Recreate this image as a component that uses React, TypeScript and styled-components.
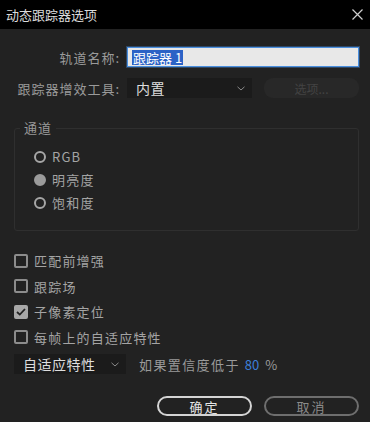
import { createGlobalStyle, styled } from "styled-components"

const GlobalStyle = createGlobalStyle`
  html, body {
    margin: 0;
    padding: 0;
    background: #222222;
  }
  body {
    font-family: "Noto Sans CJK SC", "Noto Sans", sans-serif;
  }
`

const Dialog = styled.div`
  width: 370px;
  height: 422px;
  overflow: hidden;
  display: flex;
  flex-direction: column;
  background: #222222;
`

const TitleBar = styled.div`
  height: 29px;
  flex-shrink: 0;
  background: #000;
  display: flex;
  align-items: center;
  justify-content: space-between;
  padding: 0 7px 0 6px;
  color: #dcdcdc;
  font-size: 13px;
`

const Body = styled.div`
  display: flex;
  flex-direction: column;
  padding: 18px 11px 0 14px;
`

const FieldRow = styled.div<{ $gap?: number }>`
  display: grid;
  grid-template-columns: 106px 1fr;
  column-gap: 7px;
  align-items: center;
  height: 20px;
  margin-top: ${({ $gap }) => $gap ?? 0}px;
`

const Label = styled.span`
  text-align: right;
  color: #9a9a9a;
  font-size: 13px;
  letter-spacing: 1px;
  white-space: nowrap;
`

const TextField = styled.div`
  height: 20px;
  box-sizing: border-box;
  background: #e8e8e8;
  border: 1px solid #4a8fdf;
  box-shadow: 0 0 0 1px rgba(74, 143, 223, 0.35);
  padding: 0 4px;
  display: flex;
  align-items: center;
`

const Selected = styled.span`
  background: #2b62c6;
  color: #fff;
  font-size: 13px;
  line-height: 15px;
  padding: 0 1px;
`

const ToolCell = styled.div`
  display: grid;
  grid-template-columns: 1fr 95px;
  column-gap: 12px;
  height: 20px;
`

const Select = styled.div<{ $width?: number }>`
  height: 20px;
  box-sizing: border-box;
  ${({ $width }) => ($width ? `width: ${$width}px;` : "")}
  background: #1b1b1b;
  display: flex;
  align-items: center;
  justify-content: space-between;
  padding: 0 7px 0 9px;
  color: #dedede;
  font-size: 14px;
  letter-spacing: 0.5px;
`

const OptionsButton = styled.div`
  background: #282828;
  border-radius: 9px;
  color: #434343;
  font-size: 12px;
  display: flex;
  align-items: center;
  justify-content: center;
`

const Group = styled.fieldset`
  margin: 22px 0 0 0;
  padding: 0;
  border: 1px solid #2f2f2f;
  border-radius: 3px;
  min-width: 0;
`

const Legend = styled.legend`
  margin-left: 5px;
  padding: 0 4px;
  color: #999;
  font-size: 13px;
  line-height: 16px;
  letter-spacing: 1px;
`

const RadioList = styled.div`
  display: flex;
  flex-direction: column;
  padding: 9px 0 16px 19px;
`

const OptionRow = styled.div<{ $height: number }>`
  display: flex;
  align-items: center;
  gap: 6px;
  height: ${({ $height }) => $height}px;
  color: #a4a4a4;
  font-size: 13px;
  letter-spacing: 1.2px;
`

const Radio = styled.span<{ $on?: boolean }>`
  width: 12px;
  height: 12px;
  box-sizing: border-box;
  border-radius: 50%;
  border: 2px solid ${({ $on }) => ($on ? "#9b9b9b" : "#a6a6a6")};
  background: ${({ $on }) => ($on ? "#9b9b9b" : "transparent")};
  flex-shrink: 0;
`

const CheckList = styled.div`
  display: flex;
  flex-direction: column;
  margin-top: 17px;
`

const Box = styled.span<{ $on?: boolean }>`
  width: 14px;
  height: 14px;
  box-sizing: border-box;
  border-radius: 2px;
  border: 2px solid ${({ $on }) => ($on ? "#a8a8a8" : "#8c8c8c")};
  background: ${({ $on }) => ($on ? "#a8a8a8" : "transparent")};
  display: flex;
  align-items: center;
  justify-content: center;
  flex-shrink: 0;
`

const AdaptRow = styled.div`
  display: flex;
  align-items: center;
  gap: 13px;
  margin-top: 4px;
`

const Threshold = styled.span`
  color: #9a9a9a;
  font-size: 13px;
  letter-spacing: 1.4px;
  white-space: nowrap;
`

const Value = styled.span`
  color: #3b7fd8;
  margin: 0 6px 0 5px;
  letter-spacing: 0;
`

const Footer = styled.div`
  display: flex;
  justify-content: flex-end;
  gap: 12px;
  margin-top: 22px;
`

const PillButton = styled.button<{ $primary?: boolean }>`
  width: 95px;
  height: 20px;
  box-sizing: border-box;
  border-radius: 10px;
  border: 2px solid ${({ $primary }) => ($primary ? "#d4d4d4" : "#6e6e6e")};
  background: transparent;
  color: ${({ $primary }) => ($primary ? "#e6e6e6" : "#8a8a8a")};
  font-family: inherit;
  font-size: 13px;
  letter-spacing: 2px;
  padding: 0;
  display: flex;
  align-items: center;
  justify-content: center;
  line-height: 1;
`

function Chevron() {
  return (
    <svg width="8" height="5" viewBox="0 0 8 5">
      <path d="M0.5 0.8 L4 4 L7.5 0.8" stroke="#8a8a8a" strokeWidth="1" fill="none" />
    </svg>
  )
}

function CloseIcon() {
  return (
    <svg width="11" height="11" viewBox="0 0 11 11">
      <path d="M0.5 0.5 L10.5 10.5 M10.5 0.5 L0.5 10.5" stroke="#cfcfcf" strokeWidth="1.2" />
    </svg>
  )
}

function Check() {
  return (
    <svg width="10" height="8" viewBox="0 0 10 8">
      <path d="M1 4 L3.8 6.6 L9 1" stroke="#222" strokeWidth="1.8" fill="none" />
    </svg>
  )
}

const channels = [
  { name: "RGB", on: false },
  { name: "明亮度", on: true },
  { name: "饱和度", on: false },
]

const flags = [
  { name: "匹配前增强", on: false },
  { name: "跟踪场", on: false },
  { name: "子像素定位", on: true },
  { name: "每帧上的自适应特性", on: false },
]

export default function App() {
  return (
    <>
      <GlobalStyle />
      <Dialog>
        <TitleBar>
          <span>动态跟踪器选项</span>
          <CloseIcon />
        </TitleBar>
        <Body>
          <FieldRow>
            <Label>轨道名称:</Label>
            <TextField>
              <Selected>跟踪器 1</Selected>
            </TextField>
          </FieldRow>
          <FieldRow $gap={11}>
            <Label>跟踪器增效工具:</Label>
            <ToolCell>
              <Select>
                <span>内置</span>
                <Chevron />
              </Select>
              <OptionsButton>选项...</OptionsButton>
            </ToolCell>
          </FieldRow>

          <Group>
            <Legend>通道</Legend>
            <RadioList>
              {channels.map((c) => (
                <OptionRow key={c.name} $height={23}>
                  <Radio $on={c.on} />
                  {c.name}
                </OptionRow>
              ))}
            </RadioList>
          </Group>

          <CheckList>
            {flags.map((f) => (
              <OptionRow key={f.name} $height={25.5}>
                <Box $on={f.on}>{f.on && <Check />}</Box>
                {f.name}
              </OptionRow>
            ))}
          </CheckList>

          <AdaptRow>
            <Select $width={112}>
              <span>自适应特性</span>
              <Chevron />
            </Select>
            <Threshold>
              如果置信度低于<Value>80</Value>%
            </Threshold>
          </AdaptRow>

          <Footer>
            <PillButton $primary>确定</PillButton>
            <PillButton>取消</PillButton>
          </Footer>
        </Body>
      </Dialog>
    </>
  )
}
